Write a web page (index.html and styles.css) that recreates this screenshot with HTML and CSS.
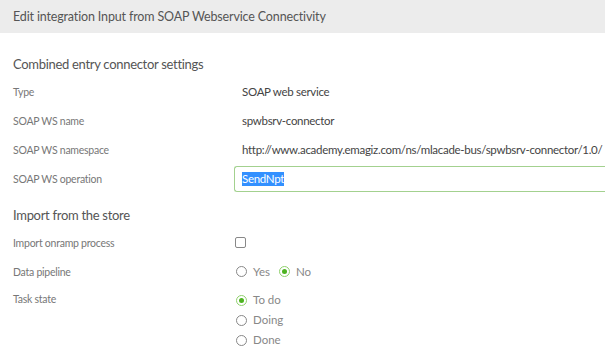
FILE: index.html
```html
<!DOCTYPE html>
<html lang="en">

<head>
  <meta charset="UTF-8">
  <title>Edit integration</title>
  <link rel="stylesheet" href="styles.css">
</head>

<body>
  <header class="modal-head">
    <h1>Edit integration Input from SOAP Webservice Connectivity</h1>
  </header>

  <section class="group">
    <h2>Combined entry connector settings</h2>
    <div class="row">
      <span class="label">Type</span>
      <span class="value">SOAP web service</span>
    </div>
    <div class="row">
      <span class="label">SOAP WS name</span>
      <span class="value">spwbsrv-connector</span>
    </div>
    <div class="row">
      <span class="label">SOAP WS namespace</span>
      <span class="value">http://www.academy.emagiz.com/ns/mlacade-bus/spwbsrv-connector/1.0/</span>
    </div>
    <div class="row">
      <span class="label">SOAP WS operation</span>
      <div class="input"><span class="selected">SendNpt</span></div>
    </div>
  </section>

  <section class="group">
    <h2 class="second">Import from the store</h2>
    <div class="row">
      <span class="label">Import onramp process</span>
      <span class="check"></span>
    </div>
    <div class="row">
      <span class="label">Data pipeline</span>
      <div class="options inline">
        <label class="option"><span class="radio"></span>Yes</label>
        <label class="option"><span class="radio on"></span>No</label>
      </div>
    </div>
    <div class="row top">
      <span class="label">Task state</span>
      <div class="options stack">
        <label class="option"><span class="radio on"></span>To do</label>
        <label class="option"><span class="radio"></span>Doing</label>
        <label class="option"><span class="radio"></span>Done</label>
      </div>
    </div>
  </section>
</body>

</html>
```

FILE: styles.css
```css
body {
  margin: 0;
  font-family: Lato, "Noto Sans", sans-serif;
  color: #555;
  background: #fff;
}

.modal-head {
  background: #ececec;
  height: 33px;
  display: flex;
  align-items: center;
  padding: 0 13px;
}

.modal-head h1 {
  margin: 0;
  font-size: 12.5px;
  letter-spacing: -0.15px;
  font-weight: normal;
  color: #555;
}

.group h2 {
  margin: 0;
  padding: 23px 13px 0;
  height: 21px;
  font-size: 13px;
  letter-spacing: -0.3px;
  font-weight: normal;
  color: #555;
}

.group h2.second {
  padding-top: 14px;
}

.row {
  display: flex;
  align-items: center;
  height: 29px;
  padding-left: 13px;
}

.row.top {
  align-items: flex-start;
  padding-top: 7px;
  height: auto;
}

.label {
  width: 221px;
  flex: none;
  font-size: 10.5px;
  letter-spacing: -0.25px;
  color: #777;
}

.value {
  padding-left: 8px;
  font-size: 11.5px;
  letter-spacing: -0.3px;
  color: #444;
  white-space: nowrap;
}

.input {
  flex: 1;
  height: 24px;
  border: 1px solid #a3d18f;
  border-right: none;
  border-radius: 3px 0 0 3px;
  display: flex;
  align-items: center;
  padding-left: 7px;
  margin-right: -2px;
}

.selected {
  background: #3390ff;
  color: #fff;
  font-size: 11.5px;
  letter-spacing: -0.3px;
  line-height: 14px;
}

.check {
  width: 9px;
  height: 9px;
  border: 1px solid #888;
  border-radius: 2px;
  margin-left: 1px;
}

.options {
  display: flex;
  font-size: 11.5px;
  line-height: 14px;
  color: #888;
}

.inline {
  gap: 7px;
}

.stack {
  flex-direction: column;
  gap: 6px;
}

.option {
  display: flex;
  align-items: center;
  gap: 6px;
  height: 14px;
}

.radio {
  width: 9px;
  height: 9px;
  border: 1px solid #888;
  border-radius: 50%;
  margin-left: 2px;
  display: flex;
  align-items: center;
  justify-content: center;
}

.radio.on {
  border-color: #8fd06c;
}

.radio.on::after {
  content: "";
  width: 5px;
  height: 5px;
  border-radius: 50%;
  background: #4db320;
}
```
